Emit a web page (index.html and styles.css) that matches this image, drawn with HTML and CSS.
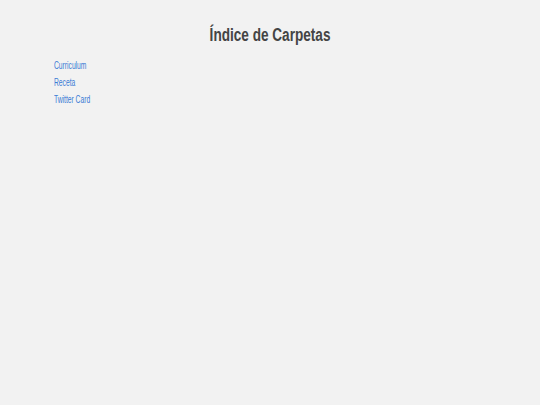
FILE: index.html
```html
<!DOCTYPE html>
<html lang="es">
<head>
<meta charset="utf-8">
<title>Índice de Carpetas</title>
<link rel="stylesheet" href="styles.css">
</head>
<body>
<main class="page">
  <h1 class="title"><span class="title-text">Índice de Carpetas</span></h1>
  <ul class="folders">
    <li><a href="#">Curriculum</a></li>
    <li><a href="#">Receta</a></li>
    <li><a href="#">Twitter Card</a></li>
  </ul>
</main>
</body>
</html>
```
FILE: styles.css
```css
html, body {
  margin: 0;
  padding: 0;
  background: #f2f2f2;
}
body {
  font-family: "Liberation Sans", Arial, sans-serif;
}
.page {
  padding: 24px 54px;
}
.title {
  margin: 0 0 13px;
  text-align: center;
  font-size: 18px;
  font-weight: bold;
  color: #444444;
  line-height: 22px;
}
.title-text {
  display: inline-block;
  transform: scaleX(0.755);
  transform-origin: center;
}
.folders {
  list-style: none;
  margin: 0;
  padding: 0;
  display: flex;
  flex-direction: column;
  gap: 5px;
  font-size: 11px;
  line-height: 12px;
}
.folders li {
  display: flex;
}
.folders a {
  display: inline-block;
  color: #3a7bd5;
  text-decoration: none;
  transform: scaleX(0.61);
  transform-origin: left center;
}
```
